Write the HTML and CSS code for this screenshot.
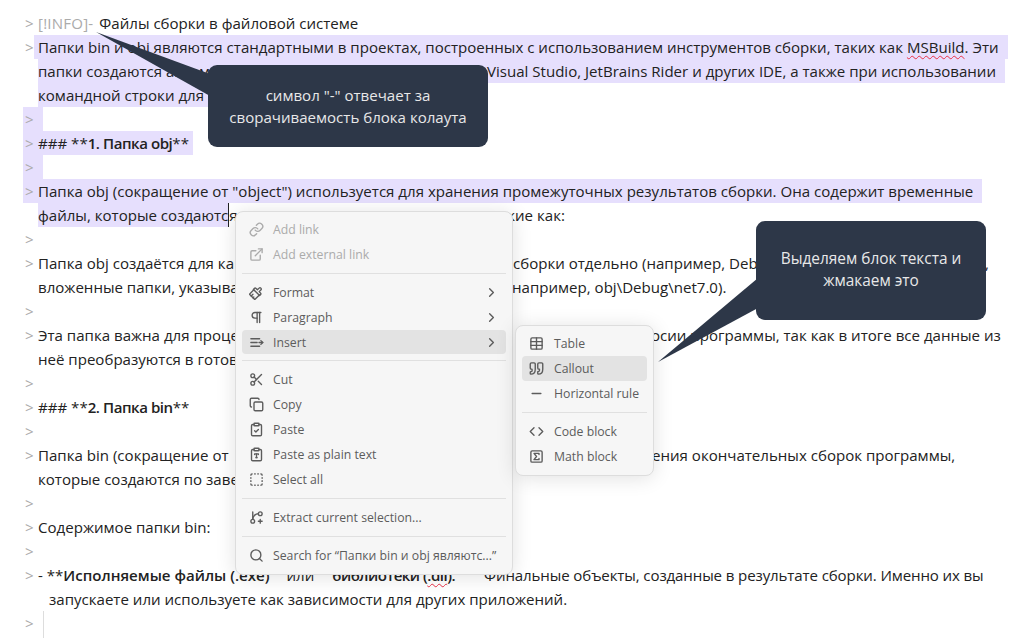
FILE: index.html
```html
<!DOCTYPE html>
<html>
<head>
    <title>Файлы сборки</title>
    <link rel="stylesheet" href="styles.css">
</head>
<body>
    <div class="editor">
        <div class="row"><span class="gt">&gt;</span><span class="token">[!INFO]-</span><span class="sp"></span><span>Файлы сборки в файловой системе</span></div>
        <div class="row"><span class="gt">&gt;</span><span class="sel-text">Папки bin и obj являются стандартными в проектах, построенных с использованием инструментов сборки, таких как <span class="typo">MSBuild</span>. Эти</span></div>
        <div class="row cont sel-line pad-l"><span class="hid w-a">папки создаются автомат</span><span>Visual Studio, JetBrains Rider и других IDE, а также при использовании</span></div>
        <div class="row cont sel-line"><span class="hid w-h">командной строки для</span></div>
        <div class="row sel-line"><span class="gt">&gt;</span><span class="empty"></span></div>
        <div class="row sel-line pad-s"><span class="gt">&gt;</span><span>### **</span><b class="head">1. Папка obj</b><span>**</span></div>
        <div class="row sel-line"><span class="gt">&gt;</span><span class="empty"></span></div>
        <div class="row sel-line pad-l"><span class="gt">&gt;</span><span>Папка obj (сокращение от "object") используется для хранения промежуточных результатов сборки. Она содержит временные</span></div>
        <div class="row cont"><span class="sel-end">файлы, которые создаютс</span><span class="hid w-b">я</span><span>кие как:</span></div>
        <div class="row"><span class="gt">&gt;</span></div>
        <div class="row"><span class="gt">&gt;</span><span class="hid w-c">Папка obj создаётся для ка</span><span class="hid w-g">сборки отдельно (например, Deb</span><span>,</span></div>
        <div class="row cont"><span class="hid w-d">вложенные папки, указыва</span><span>например, obj\Debug\net7.0).</span></div>
        <div class="row"><span class="gt">&gt;</span></div>
        <div class="row"><span class="gt">&gt;</span><span class="hid w-e">Эта папка важна для проце</span><span>осии программы, так как в итоге все данные из</span></div>
        <div class="row cont"><span>неё преобразуются в готов</span></div>
        <div class="row"><span class="gt">&gt;</span></div>
        <div class="row"><span class="gt">&gt;</span><span>### **</span><b class="head">2. Папка bin</b><span>**</span></div>
        <div class="row"><span class="gt">&gt;</span></div>
        <div class="row"><span class="gt">&gt;</span><span class="hid w-f">Папка bin (сокращение от</span><span>ения окончательных сборок программы,</span></div>
        <div class="row cont"><span>которые создаются по заве</span></div>
        <div class="row"><span class="gt">&gt;</span></div>
        <div class="row"><span class="gt">&gt;</span><span>Содержимое папки bin:</span></div>
        <div class="row"><span class="gt">&gt;</span></div>
        <div class="row"><span class="gt">&gt;</span><span>- **</span><b>Исполняемые файлы (.exe)</b><span class="gap-a"></span><span>или</span><span class="gap-c"></span><b class="tight">библиотеки (<span class="typo">.dll</span>).</b><span class="gap-b"></span><span class="narrow">Финальные объекты, созданные в результате сборки. Именно их вы</span></div>
        <div class="row list-cont"><span>запускаете или используете как зависимости для других приложений.</span></div>
        <div class="row"><span class="gt">&gt;</span><span class="indent"></span></div>
    </div>

    <div class="menu main-menu">
        <div class="item off"><svg viewBox="0 0 24 24"><path d="M10 13a5 5 0 0 0 7.54.54l3-3a5 5 0 0 0-7.07-7.07l-1.72 1.71"/><path d="M14 11a5 5 0 0 0-7.54-.54l-3 3a5 5 0 0 0 7.07 7.07l1.71-1.71"/></svg><span>Add link</span></div>
        <div class="item off"><svg viewBox="0 0 24 24"><path d="M18 13v6a2 2 0 0 1-2 2H5a2 2 0 0 1-2-2V8a2 2 0 0 1 2-2h6"/><path d="M15 3h6v6"/><path d="M10 14 21 3"/></svg><span>Add external link</span></div>
        <div class="sep"></div>
        <div class="item"><svg viewBox="0 0 24 24"><g transform="rotate(225 12 12)"><path d="M14 19.9V16h3a2 2 0 0 0 2-2v-2H5v2c0 1.1.9 2 2 2h3v3.9a2 2 0 1 0 4 0Z"/><path d="M6 12V2h12v10"/><path d="M14 2v4"/><path d="M10 2v2"/></g></svg><span>Format</span><svg class="arrow" viewBox="0 0 24 24"><path d="m9 18 6-6-6-6"/></svg></div>
        <div class="item"><svg viewBox="0 0 24 24"><path d="M13 4v16"/><path d="M17 4v16"/><path d="M19 4H9.5a4.5 4.5 0 0 0 0 9H13"/></svg><span>Paragraph</span><svg class="arrow" viewBox="0 0 24 24"><path d="m9 18 6-6-6-6"/></svg></div>
        <div class="item active"><svg viewBox="0 0 24 24"><path d="M3 6h14"/><path d="M3 12h10"/><path d="M3 18h14"/><path d="M16 12h6"/><path d="m19 9 3 3-3 3"/></svg><span>Insert</span><svg class="arrow" viewBox="0 0 24 24"><path d="m9 18 6-6-6-6"/></svg></div>
        <div class="sep"></div>
        <div class="item"><svg viewBox="0 0 24 24"><circle cx="6" cy="6" r="3"/><path d="M8.12 8.12 12 12"/><path d="M20 4 8.12 15.88"/><circle cx="6" cy="18" r="3"/><path d="M14.8 14.8 20 20"/></svg><span>Cut</span></div>
        <div class="item"><svg viewBox="0 0 24 24"><rect x="8" y="8" width="14" height="14" rx="2"/><path d="M4 16c-1.1 0-2-.9-2-2V4c0-1.1.9-2 2-2h10c1.1 0 2 .9 2 2"/></svg><span>Copy</span></div>
        <div class="item"><svg viewBox="0 0 24 24"><rect x="8" y="2" width="8" height="4" rx="1"/><path d="M16 4h2a2 2 0 0 1 2 2v14a2 2 0 0 1-2 2H6a2 2 0 0 1-2-2V6a2 2 0 0 1 2-2h2"/><path d="m9 14 2 2 4-4"/></svg><span>Paste</span></div>
        <div class="item"><svg viewBox="0 0 24 24"><rect x="8" y="2" width="8" height="4" rx="1"/><path d="M16 4h2a2 2 0 0 1 2 2v14a2 2 0 0 1-2 2H6a2 2 0 0 1-2-2V6a2 2 0 0 1 2-2h2"/><path d="M9 12v-1h6v1"/><path d="M11 17h2"/><path d="M12 11v6"/></svg><span>Paste as plain text</span></div>
        <div class="item"><svg viewBox="0 0 24 24"><path d="M5 3a2 2 0 0 0-2 2"/><path d="M19 3a2 2 0 0 1 2 2"/><path d="M21 19a2 2 0 0 1-2 2"/><path d="M5 21a2 2 0 0 1-2-2"/><path d="M9 3h1"/><path d="M9 21h1"/><path d="M14 3h1"/><path d="M14 21h1"/><path d="M3 9v1"/><path d="M21 9v1"/><path d="M3 14v1"/><path d="M21 14v1"/></svg><span>Select all</span></div>
        <div class="sep"></div>
        <div class="item"><svg viewBox="0 0 24 24"><path d="M6 3v12"/><circle cx="18" cy="6" r="3"/><circle cx="6" cy="18" r="3"/><path d="M15 6a9 9 0 0 0-9 9"/><path d="M18 15v6"/><path d="M21 18h-6"/></svg><span>Extract current selection...</span></div>
        <div class="sep"></div>
        <div class="item"><svg viewBox="0 0 24 24"><circle cx="11" cy="11" r="8"/><path d="m21 21-4.35-4.35"/></svg><span>Search for “Папки bin и obj являютс...”</span></div>
    </div>

    <div class="menu sub-menu">
        <div class="item"><svg viewBox="0 0 24 24"><rect x="3" y="3" width="18" height="18" rx="2"/><path d="M3 9h18"/><path d="M3 15h18"/><path d="M12 3v18"/></svg><span>Table</span></div>
        <div class="item active"><svg viewBox="0 0 24 24"><path d="M3 21c3 0 7-1 7-8V5c0-1.25-.756-2.017-2-2H4c-1.25 0-2 .75-2 1.972V11c0 1.25.75 2 2 2 1 0 1 0 1 1v1c0 1-1 2-2 2s-1 .008-1 1.031V20c0 1 0 1 1 1z"/><path d="M15 21c3 0 7-1 7-8V5c0-1.25-.757-2.017-2-2h-4c-1.25 0-2 .75-2 1.972V11c0 1.25.75 2 2 2h.75c0 2.25.25 4-2.75 4v3c0 1 0 1 1 1z"/></svg><span>Callout</span></div>
        <div class="item"><svg viewBox="0 0 24 24"><path d="M5 12h14"/></svg><span>Horizontal rule</span></div>
        <div class="sep"></div>
        <div class="item"><svg viewBox="0 0 24 24"><path d="m16 18 6-6-6-6"/><path d="m8 6-6 6 6 6"/></svg><span>Code block</span></div>
        <div class="item"><svg viewBox="0 0 24 24"><rect x="3" y="3" width="18" height="18" rx="2"/><path d="M16 8.9V7H8l4 5-4 5h8v-1.9"/></svg><span>Math block</span></div>
    </div>

    <svg class="tail" viewBox="0 0 1012 638"><polygon points="96,32 210,74 210,96"/><polygon points="658,362 758,278 758,308"/></svg>
    <div class="note note-info">символ "-" отвечает за<br>сворачиваемость блока колаута</div>
    <div class="note note-select">Выделяем блок текста и<br>жмакаем это</div>
</body>
</html>
```

FILE: styles.css
```css
html, body {
    height: 100%;
}

body {
    margin: 0;
    background: #fff;
    color: #222;
    font-family: "Open Sans", sans-serif;
    font-size: 15.07px;
    overflow: hidden;
    position: relative;
}

.editor {
    padding-top: 11px;
}

.row {
    display: flex;
    width: fit-content;
    height: 24px;
    line-height: 24px;
    margin-left: 23px;
    padding-left: 2px;
    white-space: pre;
}

.row b {
    font-weight: 600;
}

.row b.head {
    letter-spacing: -0.45px;
}

.row b.tight {
    letter-spacing: -0.5px;
}

.gt {
    flex: none;
    width: 13px;
    color: #ababab;
}

.token {
    color: #ababab;
    letter-spacing: 0.2px;
}

.sp {
    width: 6px;
}

.empty {
    width: 5px;
}

.gap-a {
    width: 17px;
}

.gap-c {
    width: 18px;
}

.gap-b {
    width: 29px;
}

.narrow {
    letter-spacing: -0.12px;
}

.sel-line {
    background: #e6dffd;
}

.pad-s {
    padding-right: 4px;
}

.pad-l {
    padding-right: 9px;
}

.sel-text {
    background: #e6dffd;
    margin-left: -4px;
    padding: 0 9px 0 4px;
}

.cont {
    margin-left: 38px;
    padding-left: 0;
}

.list-cont {
    margin-left: 49px;
    padding-left: 0;
}

.sel-end {
    background: #e6dffd;
    border-right: 1px solid #222;
}

.hid {
    flex: none;
    overflow: hidden;
}

.w-a { width: 449px; }
.w-b { width: 278px; }
.w-c { width: 475px; }
.w-d { width: 474px; }
.w-e { width: 613px; }
.w-f { width: 614px; }
.w-g { width: 472px; }
.w-h { width: 380px; }

.typo {
    text-decoration: underline wavy #e93147 1px;
    text-underline-offset: 2px;
}

.indent {
    width: 1px;
    height: 27px;
    margin-left: 5px;
    background: #ddd;
}

.menu {
    position: absolute;
    box-sizing: border-box;
    padding: 5px 6px 6px;
    background: #f6f6f6;
    border: 1px solid #ddd;
    border-radius: 8px;
    box-shadow: 0 2px 20px rgba(0, 0, 0, 0.12);
    color: #5c5c5c;
    font-size: 12.25px;
}

.main-menu {
    left: 235px;
    top: 211px;
    width: 278px;
}

.sub-menu {
    left: 515px;
    top: 324.5px;
    width: 139px;
    padding-top: 6px;
}

.item {
    display: flex;
    align-items: center;
    gap: 9px;
    height: 24.9px;
    padding: 0 7px;
    border-radius: 4px;
    white-space: nowrap;
}

.sub-menu .item {
    gap: 10px;
}

.item svg {
    flex: none;
    width: 15px;
    height: 15px;
    fill: none;
    stroke: #5c5c5c;
    stroke-width: 2.2;
    stroke-linecap: round;
    stroke-linejoin: round;
}

.item .arrow {
    margin-left: auto;
}

.item.active {
    background: #e3e3e3;
}

.item.off {
    color: #ababab;
}

.item.off svg {
    stroke: #ababab;
}

.sep {
    height: 1px;
    margin: 6px 0;
    background: #e0e0e0;
}

.tail {
    position: absolute;
    left: 0;
    top: 0;
    width: 1012px;
    height: 638px;
    fill: #2d3748;
}

.note {
    position: absolute;
    box-sizing: border-box;
    background: #2d3748;
    border-radius: 9px;
    color: #e8e8e8;
    line-height: 22px;
    text-align: center;
}

.note-info {
    left: 208px;
    top: 65px;
    width: 280px;
    height: 82px;
    padding-top: 19px;
}

.note-select {
    left: 756px;
    top: 221px;
    width: 230px;
    height: 99px;
    padding-top: 27px;
    font-size: 15.4px;
}
```
